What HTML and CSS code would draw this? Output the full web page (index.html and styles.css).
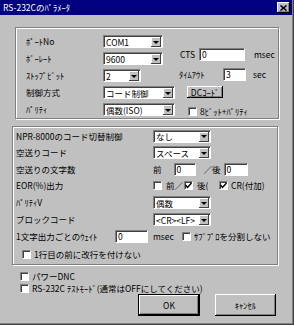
FILE: index.html
```html
<!DOCTYPE html>
<html lang="ja">
<head>
    <meta charset="UTF-8">
    <meta name="viewport" content="width=device-width, initial-scale=1.0">
    <title>RS-232Cのパラメータ</title>
    <link rel="stylesheet" href="styles.css">
</head>
<body>
    <div class="window">
        <div class="titlebar">
            <span class="title">RS-232Cのﾊﾟﾗﾒｰﾀ</span>
            <span class="close-btn">
                <svg width="7" height="6" viewBox="0 0 7 6"><path d="M0.5 0.5 L6.5 5.5 M6.5 0.5 L0.5 5.5" stroke="#000" stroke-width="1.6"/></svg>
            </span>
        </div>

        <!-- 通信設定 -->
        <div class="group group-port">
            <div class="port-grid">
                <span class="label">ﾎﾟｰﾄNo</span>
                <div class="combo w60"><span class="value">COM1</span><span class="drop"></span></div>
                <span class="label">ﾎﾞｰﾚｰﾄ</span>
                <div class="combo w60"><span class="value">9600</span><span class="drop"></span></div>
                <span class="label">ｽﾄｯﾌﾟﾋﾞｯﾄ</span>
                <div class="combo w38"><span class="value">2</span><span class="drop"></span></div>
                <span class="label">制御方式</span>
                <div class="combo w72"><span class="value">コード制御</span><span class="drop"></span></div>
                <span class="label">ﾊﾟﾘﾃｨ</span>
                <div class="combo w72"><span class="value">偶数(ISO)</span><span class="drop"></span></div>
            </div>
            <div class="port-side">
                <div class="side-row cts-row">
                    <span class="cts-label">CTS</span>
                    <div class="field w46">0</div>
                    <span class="unit msec">msec</span>
                </div>
                <div class="side-row timeout-row">
                    <span class="timeout-label">ﾀｲﾑｱｳﾄ</span>
                    <div class="field w23">3</div>
                    <span class="unit sec">sec</span>
                </div>
                <div class="btn dc-btn">DCｺｰﾄﾞ</div>
                <div class="side-row bits-row">
                    <span class="check"></span>
                    <span class="check-text">8ﾋﾞｯﾄ+ﾊﾟﾘﾃｨ</span>
                </div>
            </div>
        </div>

        <!-- NPR設定 -->
        <div class="group group-npr">
            <span class="label">NPR-8000のコード切替制御</span>
            <div class="cell"><div class="combo w58"><span class="value">なし</span><span class="drop"></span></div></div>

            <span class="label">空送りコード</span>
            <div class="cell"><div class="combo w58"><span class="value">スペース</span><span class="drop"></span></div></div>

            <span class="label">空送りの文字数</span>
            <div class="cell">
                <span>前</span>
                <div class="field w22 feed-before">0</div>
                <span class="feed-after-label">／後</span>
                <div class="field w24 feed-after">0</div>
            </div>

            <span class="label">EOR(%)出力</span>
            <div class="cell">
                <span class="check"></span>
                <span class="eor-text1">前／</span>
                <span class="check on eor-check2"><svg width="7" height="7" viewBox="0 0 7 7"><path d="M0.5 3 L2.5 5.5 L6.5 1" fill="none" stroke="#000" stroke-width="1.4"/></svg></span>
                <span class="eor-text2">後(</span>
                <span class="check on eor-check3"><svg width="7" height="7" viewBox="0 0 7 7"><path d="M0.5 3 L2.5 5.5 L6.5 1" fill="none" stroke="#000" stroke-width="1.4"/></svg></span>
                <span class="eor-text3">CR(付加)</span>
            </div>

            <span class="label">ﾊﾟﾘﾃｨV</span>
            <div class="cell"><div class="combo w58"><span class="value">偶数</span><span class="drop"></span></div></div>

            <span class="label">ブロックコード</span>
            <div class="cell"><div class="combo w58"><span class="value">&lt;CR&gt;&lt;LF&gt;</span><span class="drop"></span></div></div>

            <div class="cell">
                <span class="wait-label">1文字出力ごとのｳｪｲﾄ</span>
                <div class="field w33">0</div>
            </div>
            <div class="cell">
                <span class="wait-unit">msec</span>
                <span class="check"></span>
                <span class="check-text">ｻﾌﾞﾌﾟﾛを分割しない</span>
            </div>

            <div class="cell full">
                <span class="check"></span>
                <span class="check-text">1行目の前に改行を付けない</span>
            </div>
        </div>

        <div class="options">
            <div class="option-row">
                <span class="check"></span>
                <span class="check-text">パワーDNC</span>
            </div>
            <div class="option-row">
                <span class="check"></span>
                <span class="check-text">RS-232C ﾃｽﾄﾓｰﾄﾞ(通常はOFFにしてください)</span>
            </div>
        </div>

        <div class="buttons">
            <div class="btn ok-btn">OK</div>
            <div class="btn cancel-btn">ｷｬﾝｾﾙ</div>
        </div>
    </div>
</body>
</html>
```

FILE: styles.css
```css
body {
    margin: 0;
    background: #c0c0c0;
    font-family: "Noto Sans CJK JP", "Noto Sans", sans-serif;
    font-size: 8.5px;
    line-height: 1;
    color: #000;
}
.window {
    width: 294px;
    height: 325px;
    box-sizing: border-box;
    border-right: 1px solid #404040;
    border-bottom: 1px solid #404040;
    box-shadow: inset -1px -1px #808080;
    background: #c0c0c0;
}
.titlebar {
    height: 15px;
    margin-right: 1px;
    background: #000080;
    color: #fff;
    display: flex;
    align-items: center;
    padding-left: 3px;
}
.close-btn {
    margin-left: auto;
    margin-right: 2px;
    width: 13px;
    height: 11px;
    box-sizing: border-box;
    background: #c0c0c0;
    box-shadow: inset -1px -1px #000, inset 1px 1px #fff, inset -2px -2px #808080;
    display: flex;
    align-items: center;
    justify-content: center;
}

/* group boxes */
.group {
    box-sizing: border-box;
    border: 1px solid #808080;
    box-shadow: inset 1px 1px #fff, 1px 1px #fff;
}
.group-port {
    margin: 12px 0 0 15px;
    width: 264px;
    height: 92px;
    padding-top: 5px;
    display: flex;
}
.port-grid {
    display: grid;
    grid-template-columns: 77px auto;
    grid-auto-rows: 17px;
    align-items: center;
    padding-left: 10px;
    width: 159px;
    box-sizing: border-box;
}
.port-side {
    margin-left: 4px;
}
.side-row {
    display: flex;
    align-items: center;
    height: 13px;
}
.cts-row {
    margin-top: 15px;
}
.cts-label {
    width: 20px;
    padding-left: 1px;
    box-sizing: border-box;
}
.msec {
    margin-left: 9px;
}
.timeout-row {
    margin-top: 7px;
}
.timeout-label {
    width: 44px;
}
.sec {
    margin-left: 7px;
}
.dc-btn {
    margin: 5px 0 0 8px;
    width: 36px;
    height: 12px;
}
.bits-row {
    margin: 7px 0 0 9px;
}

.group-npr {
    margin: 7px 0 0 12px;
    width: 266px;
    height: 139px;
    padding: 1px 0 0 3px;
    display: grid;
    grid-template-columns: 137px 1fr;
    grid-template-rows: 16px 17px 16px 17px 17px 17px 17px 19px;
    align-items: center;
}
.cell {
    display: flex;
    align-items: center;
}
.cell.full {
    grid-column: 1 / 3;
    padding-left: 6px;
}
.feed-before {
    margin-left: 12px;
}
.feed-after-label {
    margin-left: 8px;
}
.feed-after {
    margin-left: 3px;
}
.eor-text1 {
    margin-left: 4px;
    width: 18px;
}
.eor-check2 {
    margin-left: 0;
}
.eor-text2 {
    margin-left: 4px;
    width: 13px;
}
.eor-check3 {
    margin-left: 9px;
}
.eor-text3 {
    margin-left: 3px;
}
.wait-label {
    width: 99px;
}
.wait-unit {
    width: 20px;
    margin-right: 9px;
}

/* controls */
.field {
    height: 13px;
    box-sizing: border-box;
    background: #fff;
    border: 1px solid;
    border-color: #808080 #fff #fff #808080;
    box-shadow: inset 1px 1px #404040;
    padding-left: 2px;
    display: flex;
    align-items: center;
}
.combo {
    height: 13px;
    box-sizing: border-box;
    background: #fff;
    border: 1px solid;
    border-color: #808080 #fff #fff #808080;
    box-shadow: inset 1px 1px #404040;
    padding: 1px 1px 0 2px;
    display: flex;
    align-items: center;
}
.combo .value {
    white-space: nowrap;
}
.drop {
    margin-left: auto;
    width: 10px;
    height: 10px;
    box-sizing: border-box;
    background: #c0c0c0;
    box-shadow: inset -1px -1px #404040, inset 1px 1px #fff;
    display: flex;
    align-items: center;
    justify-content: center;
    flex-shrink: 0;
}
.drop::after {
    content: "";
    border-left: 3px solid transparent;
    border-right: 3px solid transparent;
    border-top: 3px solid #000;
}
.w22 { width: 22px; }
.w23 { width: 23px; }
.w24 { width: 24px; }
.w33 { width: 33px; }
.w38 { width: 38px; }
.w46 { width: 46px; }
.w58 { width: 58px; }
.w60 { width: 60px; }
.w72 { width: 72px; }

.check {
    width: 9px;
    height: 9px;
    box-sizing: border-box;
    background: #fff;
    border: 1px solid;
    border-color: #808080 #fff #fff #808080;
    box-shadow: inset 1px 1px #404040;
    display: flex;
    align-items: center;
    justify-content: center;
    flex-shrink: 0;
}
.check svg {
    display: block;
}
.check-text {
    margin-left: 3px;
    white-space: nowrap;
}

.btn {
    box-sizing: border-box;
    background: #c0c0c0;
    box-shadow: inset -1px -1px #000, inset 1px 1px #fff, inset -2px -2px #808080;
    display: flex;
    align-items: center;
    justify-content: center;
}

.options {
    margin-top: 5px;
    padding-left: 20px;
}
.option-row {
    height: 12px;
    display: flex;
    align-items: center;
}
.buttons {
    display: flex;
    padding-left: 138px;
}
.ok-btn {
    width: 62px;
    height: 22px;
    border: 1px solid #000;
}
.cancel-btn {
    margin-left: 15px;
    width: 61px;
    height: 22px;
}
```
